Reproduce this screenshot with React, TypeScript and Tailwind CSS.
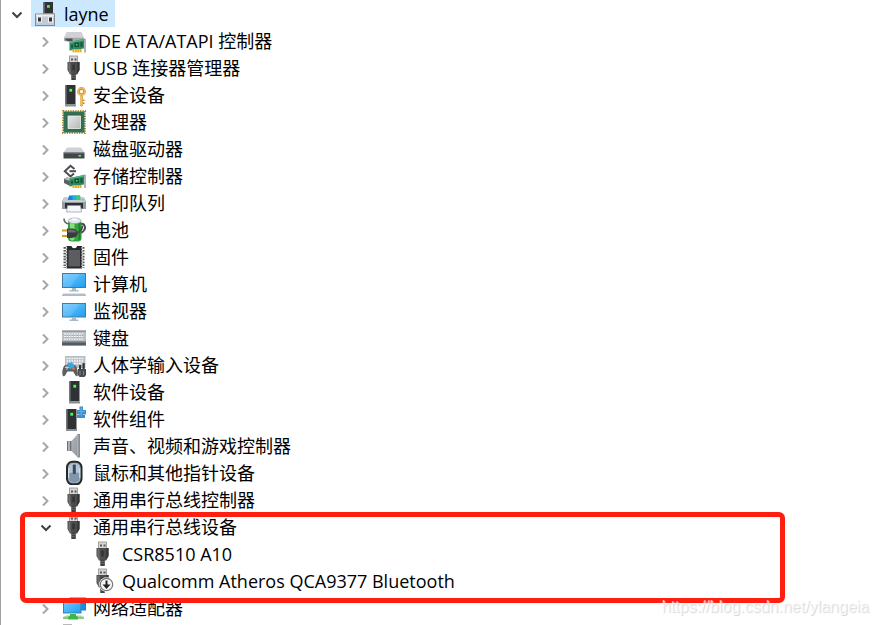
import { useState, type ReactNode } from 'react';
import clsx from 'clsx';

const Tower = ({ x = 0, y = 0, h = 20 }: { x?: number; y?: number; h?: number }) => (
  <g transform={`translate(${x} ${y})`}>
    <rect x="0.5" width="10" height={h} fill="#2f3135" />
    <rect x="0.5" width="1.5" height={h} fill="#55585e" />
    <rect x="4" y="3.5" width="3.5" height="3.5" fill="#1d7a22" />
    <rect x="4.5" y="4" width="2.5" height="2.5" fill="#4dff50" />
    <rect x="0" y={h} width="11" height="2" fill="#8b8f94" />
  </g>
);

const Card = ({ y = 0 }: { y?: number }) => (
  <g transform={`translate(0 ${y})`}>
    <path d="M7.5 3L22 0V9.5L7.5 11.5Z" fill="#2b8a5b" />
    <path d="M7.5 3L22 0V1.5L7.5 4.5Z" fill="#57b184" />
    <rect x="12.500" y="3.500" width="4.500" height="4.500" fill="#14503a" />
    <rect x="14" y="5" width="1.500" height="1.500" fill="#47e08a" />
    <path d="M9 6h2v2.500H9z M18.500 3h2v5h-2z" fill="#14573a" />
    <rect x="10.500" y="10" width="9" height="3.300" fill="#f2a41c" />
    <path d="M12.500 10.500v2.500M15 10.500v2.500M17.500 10.500v2.500" stroke="#ffdb75" strokeWidth="0.800" />
    <path d="M21 0.500H23V13.500" fill="none" stroke="#90969b" strokeWidth="1.400" />
  </g>
);

const UsbPlug = () => (
  <>
    <rect x="7.500" y="1" width="8" height="6.500" fill="#d5d5d5" stroke="#8f8f8f" strokeWidth="0.800" />
    <path d="M9 3.500h2v2H9zM12.500 3.500h2v2h-2z" fill="#5a5a5a" />
    <path d="M5.500 7h12v8l-2.500 4.500H8L5.500 15z" fill="#4b4b4b" />
    <path d="M6.500 7.500h2v8l1 3H8l-1.500-3z" fill="#707070" />
    <path d="M15.500 7h2v8L15 19.500z" fill="#353535" />
    <rect x="10.300" y="9.500" width="2.500" height="6" rx="1" fill="#333" />
    <rect x="9.300" y="19" width="4.500" height="6" fill="#414141" />
    <path d="M9.500 20.500h4M9.500 22.500h4" stroke="#777" strokeWidth="0.600" />
  </>
);

const Screen = ({ y, h }: { y: number; h: number }) => (
  <>
    <rect x="0.500" y={y} width="23" height={h} fill="url(#screen)" stroke="#437ca0" />
    <path d={`M1 ${y + 0.5}H18L8 ${y + h - 0.5}H1z`} fill="#fff" opacity="0.120" />
    <path d={`M10 ${y + h + 0.5}h4v2h2.500v1.500h-9v-1.500H10z`} fill="#a9bac7" />
  </>
);

const Keys = () => (
  <>
    <rect x="0" y="5.500" width="24" height="15" fill="#b9bec3" />
    <rect x="0" y="5.500" width="24" height="1.200" fill="#858b91" />
    <path d="M2 9H22M2 11.500H22M2 14H22" stroke="#f8f9fa" strokeWidth="1.600" strokeDasharray="1.700 0.800" />
    <path d="M2.500 10.300H22M2.500 12.800H22" stroke="#7e868d" strokeWidth="0.700" strokeDasharray="1 1.500" />
    <rect y="16.500" width="24" height="4" fill="#555b61" />
    <rect y="16.500" width="24" height="1" fill="#8a9299" />
  </>
);

const icons: Record<string, ReactNode> = {
  root: (
    <>
      <rect x="10.500" y="1" width="9.500" height="13" fill="#303236" />
      <rect x="10.500" y="1" width="1.500" height="13" fill="#5b5e63" />
      <rect x="14" y="4" width="2.800" height="2.800" fill="#43ee48" />
      <path d="M10 13.500V12h11v1.500z" fill="#8d9297" />
      <rect x="2.500" y="13" width="19" height="11.500" fill="#c5cbd3" stroke="#858b92" />
      <path d="M3 13.500h18v2H3z" fill="#eceff2" />
      <rect x="4" y="15.500" width="5" height="6" fill="#f2f2f2" />
      <rect x="15" y="15.500" width="5" height="6" fill="#f2f2f2" />
      <rect x="5" y="16.500" width="3" height="4" fill="#2f3337" />
      <rect x="16" y="16.500" width="3" height="4" fill="#2f3337" />
    </>
  ),
  ide: (
    <>
      <path d="M4.500 4h15L22 9.500H2z" fill="#cfd2d5" />
      <path d="M2 9.500h20V14H7.500L2 13z" fill="#a5a9ad" />
      <path d="M3.500 10.500h7v2.500H6l-2.500-.800z" fill="#4c5055" />
      <Card y={11} />
    </>
  ),
  usb: <UsbPlug />,
  security: (
    <>
      <Tower x={3} y={3} h={19.5} />
      <circle cx="19.500" cy="9.500" r="3" fill="none" stroke="#d79b35" strokeWidth="2.800" />
      <circle cx="19.500" cy="9.300" r="3.400" fill="none" stroke="#f0c773" strokeWidth="0.900" />
      <path d="M18 13h3v10.500L19.500 25 18 23.500z" fill="#e2ae4c" />
      <path d="M21 17.500h1.500v1.500H21zM21 20.500h1.500v1.500H21z" fill="#bd8428" />
      <path d="M19 13.500v9.500" stroke="#f7d78d" strokeWidth="0.800" />
    </>
  ),
  cpu: (
    <>
      <rect x="1" y="2" width="22" height="22" fill="none" stroke="#b28d31" strokeWidth="2" strokeDasharray="1.200 1.240" />
      <rect x="1.500" y="2.500" width="21" height="21" fill="#2f6b4e" />
      <rect x="3" y="4" width="18" height="18" fill="none" stroke="#3d7c5c" strokeWidth="0.800" />
      <rect x="6" y="7" width="12.500" height="12.500" fill="url(#metal)" stroke="#eef1ef" strokeWidth="0.800" />
    </>
  ),
  disk: (
    <>
      <path d="M5 11.500h14l3.500 5h-21z" fill="#cfd2d5" />
      <rect x="1.500" y="16.500" width="21" height="6" rx="0.500" fill="#42464a" />
      <rect x="1.500" y="16.500" width="21" height="1" fill="#777b80" />
      <rect x="16.500" y="19" width="2.500" height="1.500" fill="#4cff61" />
    </>
  ),
  storage: (
    <>
      <path d="M2 16l4.500-2.500L13 15v7.500H7L2 20z" fill="#5b6065" />
      <path d="M2 16l4.500-2.500L12 15l-4 3z" fill="#b8bdc1" />
      <path d="M12.500 6L8.500 2.800L2.800 8.200L8.500 13.500L12 10.500" fill="none" stroke="#fff" strokeWidth="4" />
      <path d="M12.500 6L8.500 2.800L2.800 8.200L8.500 13.500L12 10.500" fill="none" stroke="#4a4d51" strokeWidth="2" />
      <path d="M7.500 8.200H14" stroke="#4a4d51" strokeWidth="2" />
      <Card y={12} />
    </>
  ),
  printer: (
    <>
      <path d="M7 5.500h11l1 5H5.500z" fill="#1684dc" />
      <path d="M10.500 5.500h3.500v5h-3.500z" fill="#2ba8f0" />
      <path d="M14 5.500h4l1 5h-5z" fill="#35cf70" />
      <path d="M2 7.500h3.500v2.500h13V7.500H22l2 4v7.500H0v-7.500z" fill="#969ca2" />
      <path d="M2 7.500h3.500v2.500h13V7.500H22l1.500 4.500H.5z" fill="#c9cdd1" />
      <path d="M3 13h18v5.500H3z" fill="#2c3035" />
      <path d="M5.500 15.500h13l1 6.500h-15z" fill="#f4f6f8" stroke="#90979d" strokeWidth="0.700" />
      <rect x="19.500" y="9" width="2" height="1.500" fill="#4ce83f" />
    </>
  ),
  battery: (
    <>
      <path d="M18 7.500C23 4.500 24.500 12 21 14.500C19 16 18 17 15 17" fill="none" stroke="#484b4f" strokeWidth="2" />
      <rect x="6" y="3" width="13.500" height="21.500" rx="3.500" fill="#35a43d" />
      <rect x="8" y="5" width="4.500" height="18.500" rx="2" fill="#83df7c" />
      <rect x="16.500" y="5" width="2" height="18" rx="1" fill="#217e2d" />
      <ellipse cx="12.700" cy="3.800" rx="6.500" ry="2.800" fill="#e3e6f2" stroke="#9a9fb5" strokeWidth="0.700" />
      <ellipse cx="12.700" cy="2.500" rx="3" ry="1.300" fill="#f8f8f8" />
      <path d="M2 1.500C2 5 3.500 6.500 7 7" fill="none" stroke="#63676b" strokeWidth="1.600" />
      <path d="M20.500 8.500C20 13 17.500 15.500 14 16" fill="none" stroke="#484b4f" strokeWidth="2" />
      <path d="M0 13.500h6M0 19h6" stroke="#d69e22" strokeWidth="2.200" />
      <path d="M5 11.500h4c4 0 6.500 2 6.500 4.800s-2.500 4.700-6.500 4.700H5z" fill="#393b3e" />
      <path d="M6 12.500h3c3 0 5 1.300 5.500 3H6z" fill="#686b6e" />
    </>
  ),
  firmware: (
    <>
      <path d="M3.500 3v21M20.500 3v21" stroke="#55585b" strokeWidth="4" strokeDasharray="1.700 1.200" />
      <path d="M4.500 2h5c.5 3 5 3 5.500 0h5v22.500H4.500z" fill="#26282a" />
      <path d="M6.500 6h11.500v16.500H6.500z" fill="#5b5d60" />
      <path d="M4.500 3v21M20 3v21" stroke="#e3e3e3" strokeWidth="1.200" strokeDasharray="1.700 1.200" />
    </>
  ),
  computer: (
    <>
      <Screen y={2.5} h={14} />
      <path d="M2 22h20l2 2v1H0v-1z" fill="#afbdcb" />
      <path d="M2 22h20l.700.900H1.300z" fill="#dce4ec" />
    </>
  ),
  monitor: <Screen y={5.5} h={13.5} />,
  keyboard: <Keys />,
  hid: (
    <>
      <rect x="3" y="4" width="20.500" height="12" fill="#b9bec3" />
      <path d="M4.500 6.500H22M4.500 9H22M4.500 11.500H22" stroke="#f8f9fa" strokeWidth="1.500" strokeDasharray="1.700 0.800" />
      <path d="M2.500 13.500c2-1.500 9-1.500 11 0 2 2 3 8 2 10.500-2 1.500-3.500-4-4.500-4.500H5.500C4.500 20 3.500 25.500 1 24c-1.500-2-.5-8.500 1.500-10.500z" fill="#5c6065" />
      <path d="M3 15.500h4M5 13.700v4" stroke="#c9ced2" strokeWidth="1.200" />
      <path d="M5 11.500l5-1.500 2.500 4.500-4.500 3z" fill="#35a9e4" />
      <circle cx="11.500" cy="16.500" r="1.300" fill="#e9733f" />
      <path d="M17 13h2.200v7H17zM20.500 11h2.200v9h-2.200z" fill="#303337" />
      <path d="M16 17h8v6l-1.500 2h-5L16 23z" fill="#484c51" />
      <path d="M18 19v4M21.500 19v4" stroke="#80858a" />
    </>
  ),
  tower: <Tower x={7} y={2} h={20.5} />,
  component: (
    <>
      <Tower x={4} y={3} h={20} />
      <path d="M17.500.5h3.500V4h3v4.500h-3V9h2v3h-8V9h2.500v-.5H15V4h2.500z" fill="#3b8fcc" />
      <path d="M18.500 1.500h1.500V5H23v1h-3v3.500h-1.500V6H16V5h2.500z" fill="#5eabe0" />
    </>
  ),
  speaker: (
    <>
      <path d="M5 8h5v10H5z" fill="#6b7178" />
      <path d="M6 8h2v10H6z" fill="#aab0b6" />
      <path d="M9.500 8L16 1v23.500L9.500 18z" fill="url(#metal)" />
      <path d="M9.500 8L16 1v23.500L9.500 18z" fill="#6c747d" opacity="0.450" />
      <path d="M15.500 1H18v23.500h-2.500z" fill="#868d95" />
      <path d="M15.800 2v21.500" stroke="#c4c9cd" strokeWidth="0.800" />
    </>
  ),
  mouse: (
    <>
      <rect x="5" y="1.800" width="14.500" height="22.500" rx="5.500" fill="#97acc0" stroke="#252729" strokeWidth="2" />
      <path d="M7 13h10.500v4c0 7-10.500 7-10.500 0z" fill="#7f96ab" />
      <path d="M7 8c0-6 10.500-6 10.500 0v4.500H7z" fill="#b3c5d6" />
      <rect x="10.800" y="4.500" width="3" height="9.500" rx="0.800" fill="#3e4851" />
      <path d="M6.700 8v10M17.800 8v10" stroke="#e8eef2" strokeWidth="0.900" />
    </>
  ),
  usbDisabled: (
    <>
      <UsbPlug />
      <circle cx="15.500" cy="16.500" r="7.300" fill="#fff" />
      <circle cx="15.500" cy="16.500" r="6.200" fill="#f6f6f6" stroke="#777" strokeWidth="1.200" />
      <path d="M14.500 12.500h2v4h3l-4 4.500-4-4.500h3z" fill="#222" />
    </>
  ),
  network: (
    <>
      <rect x="8" y="3" width="15.500" height="12" fill="#1c8fd6" stroke="#277cac" />
      <rect x="1.500" y="5.500" width="17.500" height="12.500" fill="url(#screen)" stroke="#3a81aa" />
      <path d="M8 18.500h6v2h5l3 1.500v2H1v-2l3-1.500h4z" fill="#a9d8a5" />
      <path d="M1 22h21v2H1z" fill="#8bcb87" />
      <path d="M8 19h6v1.500l2 1.500v2.500H6V22l2-1.500z" fill="#3bb74a" />
    </>
  ),
  system: (
    <>
      <path d="M1 2h9v12H1z" fill="#b9b9b9" />
      <path d="M2 3h7v10H2z" fill="#eee" />
    </>
  ),
};

type Device = { name: string; icon: string; children?: Device[] };

const categories: Device[] = [
  { name: 'IDE ATA/ATAPI 控制器', icon: 'ide' },
  { name: 'USB 连接器管理器', icon: 'usb' },
  { name: '安全设备', icon: 'security' },
  { name: '处理器', icon: 'cpu' },
  { name: '磁盘驱动器', icon: 'disk' },
  { name: '存储控制器', icon: 'storage' },
  { name: '打印队列', icon: 'printer' },
  { name: '电池', icon: 'battery' },
  { name: '固件', icon: 'firmware' },
  { name: '计算机', icon: 'computer' },
  { name: '监视器', icon: 'monitor' },
  { name: '键盘', icon: 'keyboard' },
  { name: '人体学输入设备', icon: 'hid' },
  { name: '软件设备', icon: 'tower' },
  { name: '软件组件', icon: 'component' },
  { name: '声音、视频和游戏控制器', icon: 'speaker' },
  { name: '鼠标和其他指针设备', icon: 'mouse' },
  { name: '通用串行总线控制器', icon: 'usb' },
  {
    name: '通用串行总线设备',
    icon: 'usb',
    children: [
      { name: 'CSR8510 A10', icon: 'usb' },
      { name: 'Qualcomm Atheros QCA9377 Bluetooth', icon: 'usbDisabled' },
    ],
  },
  { name: '网络适配器', icon: 'network' },
  { name: '', icon: 'system' },
];

function Chevron({ open }: { open: boolean }) {
  return (
    <svg viewBox="0 0 12 12" className="size-3" fill="none" strokeWidth="2">
      {open ? (
        <path d="M1.500 4.500L6 9L10.500 4.500" stroke="#404040" />
      ) : (
        <path d="M3 2.500L7.500 7L3 11.500" stroke="#a6a6a6" />
      )}
    </svg>
  );
}

type RowProps = { device: Device; open?: boolean; selected?: boolean; onToggle?: () => void };

function Row({ device, open = false, selected, onToggle }: RowProps) {
  return (
    <div className="flex h-[27px] items-center">
      {onToggle ? (
        <button
          type="button"
          aria-label={device.name}
          aria-expanded={open}
          onClick={onToggle}
          className="flex h-full w-7 shrink-0 items-center justify-center"
        >
          <Chevron open={open} />
        </button>
      ) : (
        <span className="w-7 shrink-0" />
      )}
      <span
        className={clsx(
          'flex h-full items-center gap-[7px] pr-1.5 pl-0.5 whitespace-nowrap',
          selected && 'bg-[#cce8ff]',
        )}
      >
        <svg viewBox="0 0 24 25" className="h-[25px] w-6 shrink-0">
          {icons[device.icon]}
        </svg>
        <span className="pt-0.5">{device.name}</span>
      </span>
    </div>
  );
}

function Category({ device }: { device: Device }) {
  const [open, setOpen] = useState(!!device.children);
  return (
    <li className="relative">
      <Row device={device} open={open} onToggle={() => setOpen(!open)} />
      {open && device.children && (
        <>
          <ul className="pl-[29px]">
            {device.children.map((child) => (
              <li key={child.name}>
                <Row device={child} />
              </li>
            ))}
          </ul>
          <div className="pointer-events-none absolute -top-px right-[94px] -bottom-[9px] -left-3 z-10 rounded-md border-5 border-[#ff1f10]" />
        </>
      )}
    </li>
  );
}

export default function App() {
  const [open, setOpen] = useState(true);
  return (
    <main className="relative h-screen overflow-hidden border-l border-[#a0a0a0] bg-white pl-0.5 font-['Open_Sans','Noto_Sans_CJK_SC',sans-serif] text-[18px] leading-[27px] text-black">
      <svg className="absolute size-0" aria-hidden="true">
        <defs>
          <linearGradient id="screen" x1="0" y1="0" x2="1" y2="1">
            <stop offset="0" stopColor="#74cbff" />
            <stop offset="1" stopColor="#1e9df0" />
          </linearGradient>
          <linearGradient id="metal" x1="0" y1="0" x2="1" y2="1">
            <stop offset="0" stopColor="#e8e9e9" />
            <stop offset="1" stopColor="#b5b8b9" />
          </linearGradient>
        </defs>
      </svg>
      <Row device={{ name: 'layne', icon: 'root' }} open={open} selected onToggle={() => setOpen(!open)} />
      {open && (
        <ul className="pl-[29px]">
          {categories.map((device) => (
            <Category key={device.name} device={device} />
          ))}
        </ul>
      )}
      <span className="absolute right-2.5 bottom-2 z-20 font-['Liberation_Sans',sans-serif] text-[16px] leading-5 text-white/70 [text-shadow:1px_1px_1px_#d4d4d4]">
        https://blog.csdn.net/ylangeia
      </span>
    </main>
  );
}
